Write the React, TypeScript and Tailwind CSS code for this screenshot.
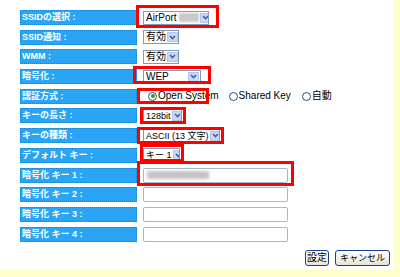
import React from "react";

function Arrow() {
  return (
    <span className="ml-auto mr-[1px] shrink-0 w-[11px] h-[10px] bg-[#c8d7fb] border border-[#b4c6ee] flex items-center justify-center">
      <svg width="7" height="5" viewBox="0 0 7 5">
        <path d="M1 1l2.5 2.5L6 1" stroke="#4a5f8c" strokeWidth="1.6" fill="none" />
      </svg>
    </span>
  );
}

function Select({ w, small, children }: { w: string; small?: boolean; children: React.ReactNode }) {
  return (
    <div
      className={`${w} ${small ? "text-[9px]" : "text-[10px]"} h-[14px] flex items-center border border-[#7f9db9] bg-white pl-[2px] leading-[12px] text-black overflow-hidden`}
    >
      <span className="whitespace-nowrap flex items-center pr-[1px]">{children}</span>
      <Arrow />
    </div>
  );
}

function Radio({ on, label }: { on?: boolean; label: string }) {
  return (
    <span className="flex items-center gap-[1px] text-[10px] leading-[12px] text-black">
      <span className="w-[9px] h-[9px] rounded-full border border-[#1c5180] bg-white flex items-center justify-center">
        {on && <span className="w-[4px] h-[4px] rounded-full bg-[#21a121]" />}
      </span>
      {label}
    </span>
  );
}

function Input({ children }: { children?: React.ReactNode }) {
  return (
    <div className="w-[145px] h-[15px] border border-[#a9b7c6] rounded-[2px] bg-white flex items-center pl-[3px]">
      {children}
    </div>
  );
}

const rows: [string, React.ReactNode][] = [
  [
    "SSIDの選択 :",
    <Select w="w-[66px]">
      AirPort
      <span className="ml-[2px] w-[20px] h-[9px] bg-[#c9c9c9] blur-[1px]" />
    </Select>,
  ],
  ["SSID通知 :", <Select w="w-[36px]">有効</Select>],
  ["WMM :", <Select w="w-[36px]">有効</Select>],
  ["暗号化 :", <Select w="w-[58px]">WEP</Select>],
  [
    "認証方式 :",
    <div className="flex items-center pl-[5px]">
      <Radio on label="Open System" />
      <span className="w-[10px]" />
      <Radio label="Shared Key" />
      <span className="w-[11px]" />
      <Radio label="自動" />
    </div>,
  ],
  ["キーの長さ :", <Select w="w-[39px]" small>128bit</Select>],
  ["キーの種類 :", <Select w="w-[77px]" small>ASCII (13 文字)</Select>],
  ["デフォルト キー :", <Select w="w-[37px]" small>キー 1</Select>],
  [
    "暗号化 キー 1 :",
    <Input>
      <span className="w-[62px] h-[8px] bg-[#c4c4c4] blur-[1.5px]" />
    </Input>,
  ],
  ["暗号化 キー 2 :", <Input />],
  ["暗号化 キー 3 :", <Input />],
  ["暗号化 キー 4 :", <Input />],
];

// red highlight boxes [left, top, width, height]
const marks = [
  [136, 5, 83, 23],
  [133, 66, 78, 18],
  [137, 88, 72, 16],
  [140, 107, 46, 17],
  [137, 127, 87, 17],
  [140, 144, 44, 18],
  [137, 161, 157, 25],
];

export default function App() {
  return (
    <div className="w-[400px] h-[277px] bg-[#ffffcc] font-['Liberation_Sans','Noto_Sans_CJK_JP',sans-serif]">
      <div className="relative w-[393px] h-[270px] bg-white pt-[10px] flex flex-col">
        {rows.map(([label, value], i) => (
          <div key={i} className="h-[19.7px] flex items-start">
            <div className="ml-[20px] w-[117px] h-[15px] bg-[#2aa5f6] border border-dotted border-[#0f86d8] text-white font-bold text-[9px] leading-[13px] pl-[1px] whitespace-nowrap">
              {label}
            </div>
            <div className="ml-[6px] h-[15px] flex items-center">{value}</div>
          </div>
        ))}

        <div className="mt-auto mb-[4px] mr-[3px] flex justify-end gap-[6px]">
          <button className="w-[24px] h-[16px] rounded-[3px] border border-[#1c3f8c] bg-gradient-to-b from-white to-[#e6e3d6] text-[10px] leading-[12px] text-black">
            設定
          </button>
          <button className="w-[55px] h-[16px] rounded-[3px] border border-[#1c3f8c] bg-gradient-to-b from-white to-[#e6e3d6] text-[9px] leading-[12px] text-black">
            キャンセル
          </button>
        </div>

        {marks.map(([l, t, w, h], i) => (
          <div
            key={i}
            className="absolute border-[3px] border-[#ff0000] pointer-events-none"
            style={{ left: l, top: t, width: w, height: h }}
          />
        ))}
      </div>
    </div>
  );
}
